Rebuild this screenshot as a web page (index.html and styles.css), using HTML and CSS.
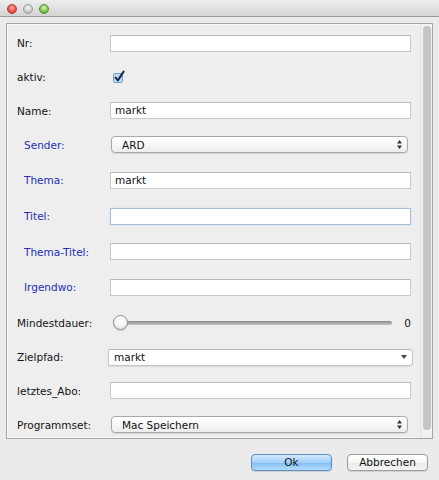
FILE: index.html
```html
<!DOCTYPE html>
<html lang="de">
<head>
<meta charset="utf-8">
<title>Abo</title>
<link rel="stylesheet" href="styles.css">
</head>
<body>
<div class="window">
  <div class="titlebar">
    <span class="light red"></span>
    <span class="light gray"></span>
    <span class="light green"></span>
  </div>
  <div class="content">
    <div class="panel">
      <div class="form">
        <div class="lbl">Nr:</div>
        <div class="field"></div>

        <div class="lbl">aktiv:</div>
        <div class="check">
          <svg width="14" height="14" viewBox="0 0 14 14">
            <rect x="0.5" y="3.5" width="9" height="9" rx="1" fill="#bcd9f5" stroke="#7d9cc2"/>
            <path d="M2.6 7.6 L4.9 10.4 L10.6 1.6" fill="none" stroke="#1b2a4e" stroke-width="2" stroke-linecap="round" stroke-linejoin="round"/>
          </svg>
        </div>

        <div class="lbl">Name:</div>
        <div class="field">markt</div>

        <div class="lbl blue">Sender:</div>
        <div class="combo">
          <span>ARD</span>
          <svg class="updown" width="5" height="9" viewBox="0 0 5 9"><path d="M2.5 0 L5 3.5 L0 3.5 Z M0 5.5 L5 5.5 L2.5 9 Z" fill="#333"/></svg>
        </div>

        <div class="lbl blue">Thema:</div>
        <div class="field">markt</div>

        <div class="lbl blue">Titel:</div>
        <div class="field focus"></div>

        <div class="lbl blue">Thema-Titel:</div>
        <div class="field"></div>

        <div class="lbl blue">Irgendwo:</div>
        <div class="field"></div>

        <div class="lbl">Mindestdauer:</div>
        <div class="sliderrow">
          <div class="slider">
            <span class="knob"></span>
            <span class="track"></span>
          </div>
          <span class="value">0</span>
        </div>

        <div class="lbl">Zielpfad:</div>
        <div class="editcombo">
          <span class="edittext">markt</span>
          <span class="arrowbtn"><svg width="6" height="4" viewBox="0 0 6 4"><path d="M0 0 L6 0 L3 4 Z" fill="#444"/></svg></span>
        </div>

        <div class="lbl">letztes_Abo:</div>
        <div class="field"></div>

        <div class="lbl">Programmset:</div>
        <div class="combo">
          <span>Mac Speichern</span>
          <svg class="updown" width="5" height="9" viewBox="0 0 5 9"><path d="M2.5 0 L5 3.5 L0 3.5 Z M0 5.5 L5 5.5 L2.5 9 Z" fill="#333"/></svg>
        </div>
      </div>
      <div class="scrollbar"><div class="thumb"></div></div>
    </div>
  </div>
  <div class="buttons">
    <button class="btn default">Ok</button>
    <button class="btn">Abbrechen</button>
  </div>
</div>
</body>
</html>
```
FILE: styles.css
```css
* { box-sizing: border-box; }
html, body {
  margin: 0;
  padding: 0;
  background: #ececec;
}
body {
  font-family: "DejaVu Sans", "Liberation Sans", sans-serif;
  font-size: 10.5px;
  color: #111;
}
.window {
  position: relative;
  width: 439px;
  height: 480px;
  display: flex;
  flex-direction: column;
  background: #ebebeb;
  overflow: hidden;
}
.titlebar {
  height: 17px;
  flex: none;
  background: linear-gradient(#eeeeee, #d4d4d4);
  border-bottom: 1px solid #9c9c9c;
  display: flex;
  align-items: flex-start;
  gap: 6px;
  padding: 4px 0 0 7px;
}
.light {
  width: 10px;
  height: 10px;
  border-radius: 50%;
  display: block;
}
.light.red {
  background: radial-gradient(circle at 50% 35%, #ffb0a8 0%, #f0625a 45%, #c8302a 100%);
  border: 1px solid #a83a34;
}
.light.gray {
  background: radial-gradient(circle at 50% 35%, #f4f4f4 0%, #d2d2d2 50%, #a8a8a8 100%);
  border: 1px solid #9a9a9a;
}
.light.green {
  background: radial-gradient(circle at 50% 35%, #d8f8b8 0%, #8fd060 45%, #4e9a2c 100%);
  border: 1px solid #4f8a34;
}
.content {
  flex: none;
  padding: 6px 6px 0 6px;
}
.panel {
  height: 416px;
  border: 1px solid #a4a4a4;
  box-shadow: inset 0 0 0 1px #f9f9f9;
  background: #eeeeee;
  display: flex;
  overflow: hidden;
}
.form {
  flex: none;
  width: 413px;
  padding: 2px 0 0 10px;
  display: grid;
  grid-template-columns: 93px 301px;
  grid-template-rows: 34px 34px 33px 35px 36px 36px 35px 36px 35px 34px 33px 35px;
  align-items: center;
}
.lbl {
  color: #141414;
  white-space: nowrap;
}
.lbl.blue {
  color: #2430b4;
  padding-left: 7px;
}
.field {
  height: 17px;
  background: #ffffff;
  border: 1px solid #c9c9c9;
  border-top-color: #b9b9b9;
  padding: 0 4px;
  line-height: 15px;
  color: #111;
}
.field.focus {
  border-color: #a9bdd6;
  box-shadow: 0 0 0 1px #e0e9f4;
}
.check {
  padding-left: 3px;
  height: 14px;
}
.check svg { display: block; }
.combo {
  height: 17px;
  margin: 0 3px 0 1px;
  border: 1px solid #a9a9a9;
  border-radius: 4px;
  background: linear-gradient(#ffffff, #f6f6f6 60%, #ececec);
  box-shadow: 0 1px 1px rgba(0,0,0,0.10);
  display: flex;
  align-items: center;
  justify-content: space-between;
  padding: 0 5px 0 10px;
  color: #111;
}
.updown { display: block; }
.sliderrow {
  display: flex;
  align-items: center;
  padding-left: 3px;
}
.slider {
  width: 282px;
  display: flex;
  align-items: center;
}
.knob {
  width: 15px;
  height: 15px;
  border-radius: 50%;
  border: 1px solid #8e8e8e;
  background: radial-gradient(circle at 50% 30%, #ffffff 0%, #f4f4f4 55%, #d8d8d8 100%);
  box-shadow: 0 1px 1px rgba(0,0,0,0.15);
  position: relative;
  z-index: 1;
  flex: none;
}
.track {
  flex: 1;
  height: 4px;
  margin-left: -2px;
  border-radius: 2px;
  background: linear-gradient(#8a8a8a, #a8a8a8 50%, #c4c4c4);
}
.value {
  margin-left: 12px;
  color: #111;
}
.editcombo {
  height: 17px;
  margin: 0 -2px 0 -2px;
  display: flex;
  background: #ffffff;
  border: 1px solid #c6c6c6;
  border-top-color: #b6b6b6;
  border-radius: 0 4px 4px 0;
  box-shadow: 0 1px 1px rgba(0,0,0,0.08);
}
.edittext {
  flex: 1;
  padding-left: 5px;
  line-height: 15px;
  color: #111;
}
.arrowbtn {
  width: 15px;
  display: flex;
  align-items: center;
  justify-content: center;
  padding-right: 2px;
}
.arrowbtn svg { display: block; }
.scrollbar {
  flex: none;
  width: 12px;
  border-left: 1px solid #e2e2e2;
  background: #f1f1f1;
  padding: 2px 0 8px 2px;
}
.thumb {
  width: 8px;
  height: 100%;
  border-radius: 4px;
  background: #c6c6c6;
}
.buttons {
  flex: none;
  display: flex;
  justify-content: flex-end;
  gap: 15px;
  padding: 15px 11px 0 0;
}
.btn {
  width: 81px;
  height: 17px;
  padding: 0;
  margin: 0;
  font-family: "DejaVu Sans", "Liberation Sans", sans-serif;
  font-size: 10.5px;
  color: #111;
  border-radius: 4px;
  border: 1px solid #9c9c9c;
  background: linear-gradient(#ffffff, #f7f7f7 50%, #eaeaea 51%, #f4f4f4);
  box-shadow: 0 1px 1px rgba(0,0,0,0.12);
  line-height: 15px;
}
.btn.default {
  border-color: #5b8cc4;
  background: linear-gradient(#d4eafc, #a2d0f8 50%, #7ebdf4 51%, #b4dcfb);
}
```
